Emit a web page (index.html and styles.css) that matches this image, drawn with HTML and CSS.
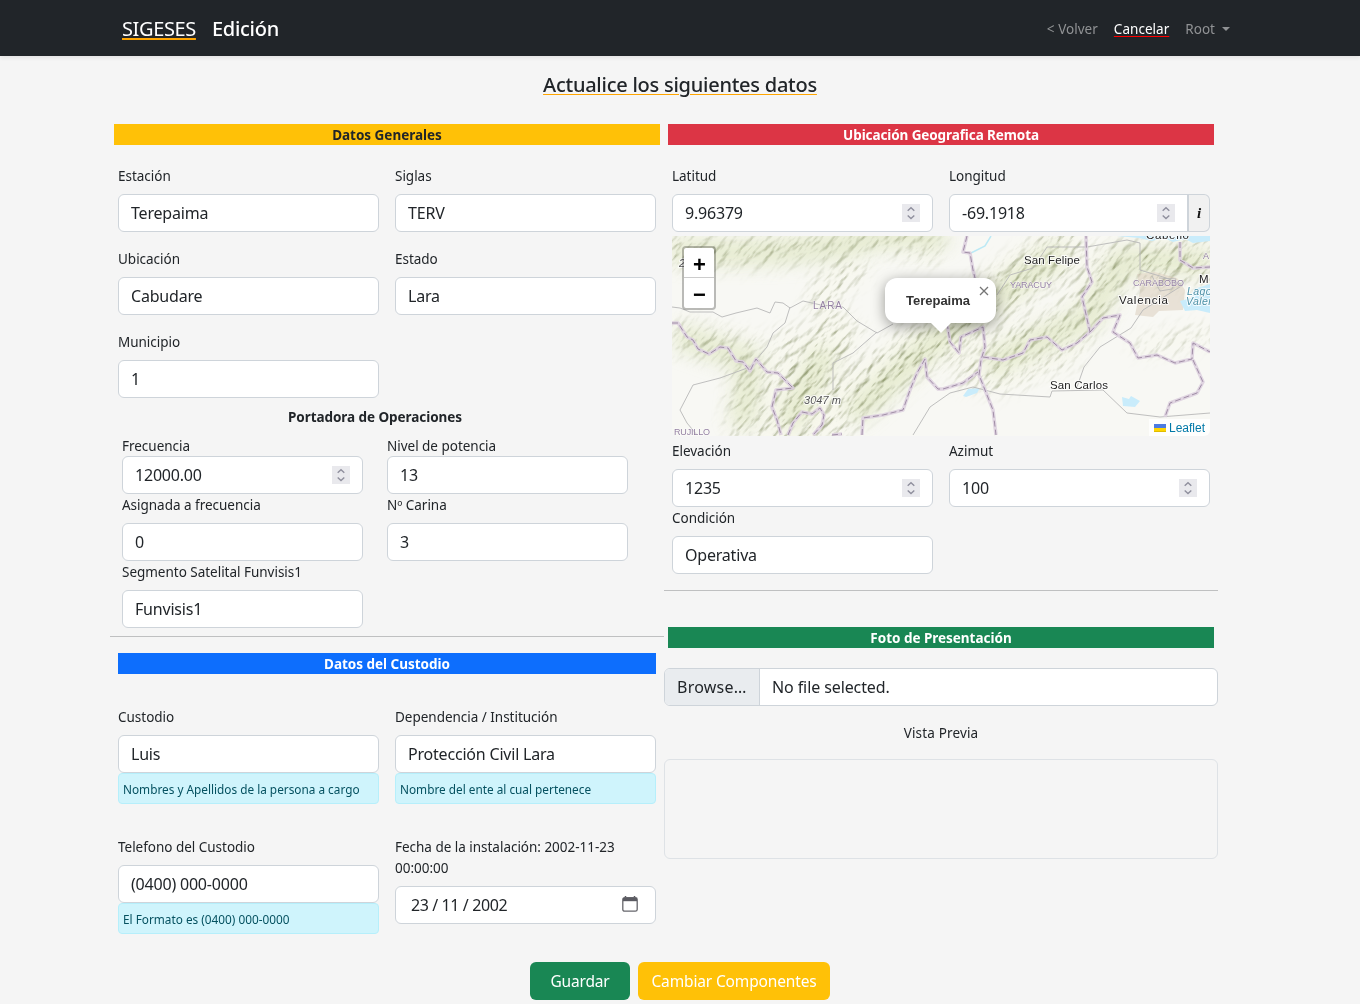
FILE: index.html
```html
<!DOCTYPE html>
<html lang="es">
<head>
<meta charset="utf-8">
<title>SIGESES - Edición</title>
<link rel="stylesheet" href="styles.css">
</head>
<body>
<svg class="defs" width="0" height="0" aria-hidden="true">
  <symbol id="spin" viewBox="0 0 18 18"><path d="M5.7 6.7 9 3.7l3.3 3M5.7 11.6l3.3 3 3.3-3" fill="none" stroke="#8f8f9d" stroke-width="1.4"/></symbol>
</svg>
<nav class="navbar">
  <div class="nav-left"><a class="brand">SIGESES</a><span class="page-name">Edición</span></div>
  <div class="nav-right"><a>&lt; Volver</a><a class="cancel">Cancelar</a><a class="user">Root<i class="caret"></i></a></div>
</nav>
<main class="container">
  <h1 class="title"><span>Actualice los siguientes datos</span></h1>
  <div class="columns">
    <section class="left">
      <h2 class="bar yellow">Datos Generales</h2>
      <div class="grid general">
        <label class="field"><span>Estación</span><div class="control"><input value="Terepaima"></div></label>
        <label class="field"><span>Siglas</span><div class="control"><input value="TERV"></div></label>
        <label class="field"><span>Ubicación</span><div class="control"><input value="Cabudare"></div></label>
        <label class="field"><span>Estado</span><div class="control"><input value="Lara"></div></label>
        <label class="field"><span>Municipio</span><div class="control"><input value="1"></div></label>
      </div>
      <h3 class="subtitle">Portadora de Operaciones</h3>
      <div class="grid carrier">
        <label class="field tight"><span>Frecuencia</span><div class="control"><input value="12000.00"><svg class="spin"><use href="#spin"/></svg></div></label>
        <label class="field tight"><span>Nivel de potencia</span><div class="control"><input value="13"></div></label>
        <label class="field"><span>Asignada a frecuencia</span><div class="control"><input value="0"></div></label>
        <label class="field"><span>Nº Carina</span><div class="control"><input value="3"></div></label>
        <label class="field"><span>Segmento Satelital Funvisis1</span><div class="control"><input value="Funvisis1"></div></label>
      </div>
      <hr>
      <h2 class="bar blue">Datos del Custodio</h2>
      <div class="grid custodian">
        <div class="field"><span>Custodio</span><div class="control"><input value="Luis"></div><p class="help">Nombres y Apellidos de la persona a cargo</p></div>
        <div class="field"><span>Dependencia / Institución</span><div class="control"><input value="Protección Civil Lara"></div><p class="help">Nombre del ente al cual pertenece</p></div>
        <div class="field"><span>Telefono del Custodio</span><div class="control"><input value="(0400) 000-0000"></div><p class="help">El Formato es (0400) 000-0000</p></div>
        <div class="field"><span>Fecha de la instalación: 2002-11-23<br>00:00:00</span><div class="control date"><input value="23 / 11 / 2002"><svg width="16" height="16" viewBox="0 0 16 16"><path d="M3.500 0v3M12.500 0v3" stroke="#5b5b62" stroke-width="1.500"/><path d="M.8 3.500A1.800 1.800 0 0 1 2.600 1.700h10.800a1.800 1.800 0 0 1 1.800 1.800V13.400a1.800 1.800 0 0 1-1.800 1.800H2.600A1.800 1.800 0 0 1 .8 13.400z" fill="none" stroke="#66666c" stroke-width="1.300"/><path d="M1 2h14v3.200H1z" fill="#5b5b62"/></svg></div></div>
      </div>
    </section>
    <section class="right">
      <h2 class="bar red">Ubicación Geografica Remota</h2>
      <div class="grid coords">
        <label class="field"><span>Latitud</span><div class="control"><input value="9.96379"><svg class="spin"><use href="#spin"/></svg></div></label>
        <div class="field"><span>Longitud</span><div class="group"><div class="control"><input value="-69.1918"><svg class="spin"><use href="#spin"/></svg></div><button class="info">i</button></div></div>
      </div>
      <div class="map">
        <svg class="terrain" width="538" height="200" viewBox="0 0 538 200">
          <defs>
            <filter id="relief" x="0" y="0" width="100%" height="100%" color-interpolation-filters="sRGB">
              <feTurbulence type="fractalNoise" baseFrequency=".06 .16" numOctaves="4" seed="11"/>
              <feColorMatrix values="0 0 0 0 0  0 0 0 0 0  0 0 0 0 0  1 0 0 0 0"/>
              <feDiffuseLighting surfaceScale="2.4" diffuseConstant="1.22" lighting-color="#ffffff"><feDistantLight azimuth="270" elevation="55"/></feDiffuseLighting>
              <feComponentTransfer><feFuncR type="linear" slope=".52" intercept=".48"/><feFuncG type="linear" slope=".48" intercept=".52"/><feFuncB type="linear" slope=".64" intercept=".34"/></feComponentTransfer>
            </filter>
            <filter id="soft" x="-20%" y="-20%" width="140%" height="140%"><feGaussianBlur stdDeviation="9"/></filter>
            <mask id="ranges">
              <g filter="url(#soft)" fill="none" stroke="#fff" stroke-linecap="round">
                <path d="M0 14Q90 20 150 5T255 12 M150 70Q160 35 180 35" stroke-width="30" opacity=".8"/>
                <path d="M10 100L75 115 70 190 M118 105L100 160" stroke-width="30" opacity=".75"/>
                <path d="M110 190L140 130 165 100M150 185L210 140 290 80 390 15" stroke-width="46"/>
                <path d="M300 130L400 90 440 30 538 25" stroke-width="44" opacity=".85"/>
                <path d="M320 150L400 120M470 110L538 98" stroke-width="18" opacity=".7"/>
              </g>
            </mask>
          </defs>
          <rect width="538" height="200" fill="#f8f8f4"/>
          <g filter="url(#soft)" fill="none" stroke="#dfe6c8" opacity=".7"><path d="M0 15Q120 22 190 5T270 12M5 100L78 125 70 190M115 190L155 115M180 180L280 90 390 15M315 130L420 80 450 25 538 25" stroke-width="25"/></g>
          <path d="M465 38l18-2 22 6 8 12-2 20-24 1-6 6-18-2 5-24z" fill="#e8e1d6"/>
          <g class="shade" mask="url(#ranges)"><g transform="rotate(-48 269 100)"><rect x="-60" y="-220" width="660" height="640" filter="url(#relief)"/></g></g>
          <g fill="#c9ecfb"><path d="M445 0h93v5l-17 2-8-4-12 3-9-4-12 3-13-3z"/><path d="M538 48l-16 5-3 9-11 3 5 10 12-1 13 3zM291 160l5-7 12-1-3 5-11 4zM450 161l7 2 2-3 9 5-5 6-12-1z"/></g>
          <g fill="none" stroke="#b8b8b8" stroke-width=".9">
            <path d="M0 71l8 1 10 4h23l9 5 14-4 21-5 13 5 5-11 8 1 7 5 13-7 18 4 22 2 14 14 20 12 16-9"/>
            <path d="M118 71l-5 16-12 10-6 14-17 20-30 11-27 7-13 25 7 13 10 12M205 96l-24 21-20 10v27M241 199l17-28 20-14 23-6 27 7 50 3 2-6 51-1 24 23 33 4 50-4"/>
            <path d="M325 59l13-20 23-7 14-21 40 0 40-7 13 3v27l23 7 20 8-40 25-12 18-31 19-16 20-7 20M480 40l8 15 12-2 4-10-17-1"/>
          </g>
          <path d="M319 0l-6 10-14 7" fill="none" stroke="#bce9f5" stroke-width="1.5"/>
          <defs><path id="borders" d="M0 87L6 87 15 101 21 104 26 113 37 118 48 111 56 112 64 125 71 126 78 135 84 123 95 136 106 137 121 152 104 154 100 171 105 184 109 199M116 199L121 187 130 176 140 178 148 172 152 179 150 189 141 199M160 199L170 198M190 199L191 182 211 179 231 174 238 154 245 137 253 123 255 141 266 153 271 153 291 147 306 136M295 0L291 16 298 17 301 34 303 42M275 87L278 106 287 117 289 101 311 91 313 111 309 124 307 139 313 154 321 174 324 199M311 121L331 124 351 117 358 104 375 101 390 114 405 107 418 96 413 74 410 61 420 46 415 31 414 0M418 96L431 82 448 79 441 96 458 107 466 122 485 119 503 127 520 123 521 107 538 116M521 124L531 146 525 157 498 167 493 181M508 6L508 24 521 32 538 31"/></defs>
          <g fill="none" stroke-linejoin="round"><use href="#borders" stroke="#ddd0df" stroke-opacity=".9" stroke-width="3.500"/><use href="#borders" stroke="#98869f" stroke-width=".9" stroke-dasharray="6 3"/></g>
          <g class="places">
            <text x="352" y="28" textLength="56">San Felipe</text><text x="447" y="68" textLength="49">Valencia</text><text x="378" y="153" textLength="58">San Carlos</text><text x="527" y="47">M</text><text x="474" y="3" textLength="43">Cabello</text>
          </g>
          <g class="states">
            <text class="lara" x="141" y="73" textLength="29">LARA</text><text x="338" y="52" textLength="42">YARACUY</text><text x="461" y="50" textLength="51">CARABOBO</text><text x="531" y="23">A</text><text x="2" y="199" textLength="36">RUJILLO</text>
          </g>
          <g class="heights"><text x="132" y="168" textLength="37">3047 m</text><text x="7" y="31">2</text></g>
          <g class="water"><text x="515" y="59">Lago</text><text x="514" y="69">Valer</text></g>
        </svg>
        <div class="zoom"><b>+</b><b>−</b></div>
        <div class="popup"><strong>Terepaima</strong><span class="close"><svg width="10" height="10"><path d="M1 1l8 8M9 1L1 9" stroke="#757575" stroke-width="1.300"/></svg></span></div>
        <div class="credit"><svg width="12" height="8"><path fill="#4c7be1" d="M0 0h12v4H0z"/><path fill="#ffd500" d="M0 4h12v3H0z"/><path fill="#e0bc00" d="M0 7h12v1H0z"/></svg>Leaflet</div>
      </div>
      <div class="grid position">
        <label class="field"><span>Elevación</span><div class="control"><input value="1235"><svg class="spin"><use href="#spin"/></svg></div></label>
        <label class="field"><span>Azimut</span><div class="control"><input value="100"><svg class="spin"><use href="#spin"/></svg></div></label>
        <label class="field"><span>Condición</span><div class="control"><input value="Operativa"></div></label>
      </div>
      <hr>
      <h2 class="bar green">Foto de Presentación</h2>
      <div class="file"><span class="browse">Browse…</span><span class="chosen">No file selected.</span></div>
      <p class="preview-label">Vista Previa</p>
      <div class="preview"></div>
    </section>
  </div>
  <div class="actions"><button class="save">Guardar</button><button class="change">Cambiar Componentes</button></div>
</main>
</body>
</html>
```

FILE: styles.css
```css
* { box-sizing: border-box; }
body { margin: 0; height: 1004px; overflow: hidden; background: #f5f5f5; color: #212529; font: 13.5px/21px "Noto Sans", sans-serif; letter-spacing: -.02px; }
h1, h2, h3, p { margin: 0; }
.defs { position: absolute; }
input, button { font: inherit; letter-spacing: inherit; color: inherit; }
.navbar { height: 56px; padding: 1px 130px 0 122px; display: flex; justify-content: space-between; align-items: center; background: #212529; color: #fff; box-shadow: 0 2px 4px rgba(0,0,0,.075); }
.nav-left { display: flex; gap: 16px; font-size: 20px; line-height: 30px; letter-spacing: -.3px; }
.brand { letter-spacing: -.37px; text-decoration: underline #ffa500 2px; text-underline-offset: 2px; }
.page-name { font-weight: 500; letter-spacing: -.28px; }
.nav-right { display: flex; gap: 16px; padding-top: 1px; color: #909294; }
.nav-right a { letter-spacing: .03px; }
.cancel { color: #fff; text-decoration: underline red 1px; text-underline-offset: 2px; }
.user { display: flex; align-items: center; gap: 7px; }
.caret { border: 4px solid transparent; border-top-color: currentColor; border-bottom: 0; }
.container { width: 1140px; margin: 0 auto; }
.title { height: 68px; padding-top: 14px; font-size: 20px; line-height: 30px; font-weight: 500; letter-spacing: -.25px; text-align: center; }
.title span { text-decoration: underline #ffa500 1.4px; text-underline-offset: 2px; }
.columns { display: grid; grid-template-columns: 554px 554px; height: 838px; }
.bar { height: 21px; margin: 0 4px; padding-top: 1px; font-size: 13.5px; line-height: 21px; font-weight: 700; text-align: center; }
.yellow { background: #ffc107; }
.red { background: #dc3545; color: #fff; letter-spacing: -.1px; }
.green { background: #198754; color: #fff; }
.blue { background: #0d6efd; color: #fff; margin: 0 8px; }
.grid { display: grid; grid-template-columns: 261px 261px; column-gap: 16px; margin: 0 8px; align-items: start; }
.general { margin-top: 20px; row-gap: 16px; }
.coords { margin-top: 20px; }
.field { display: flex; flex-direction: column; gap: 8px; min-width: 0; }
.field > span { padding-top: 1px; margin-bottom: -1px; }
.tight { gap: 0; }
.control { height: 38px; width: 100%; min-width: 0; display: flex; align-items: center; padding: 0 12px; background: #fff; border: 1px solid #ced4da; border-radius: 6px; }
.control input { flex: 1; width: 0; min-width: 0; padding: 0; border: 0; outline: 0; background: none; font-size: 16px; letter-spacing: -.2px; }
.spin { width: 18px; height: 18px; flex: none; background: #e9e9ed; }
.subtitle { margin: 8px 24px 7px 0; padding-top: 1px; font-size: 13.5px; line-height: 21px; font-weight: 700; letter-spacing: -.06px; text-align: center; }
.carrier { grid-template-columns: 241px 241px; column-gap: 24px; margin: 0 12px; }
hr { height: 1px; margin: 8px 0 16px; border: 0; background: #bfc0c1; }
.custodian { margin-top: 32px; row-gap: 32px; }
.help { height: 31px; margin-top: -8px; padding: 0 4px; font-size: 11.8px; line-height: 31px; letter-spacing: 0; border: 1px solid #b6effb; border-radius: 4px; background: #cff4fc; color: #055160; }
.date { padding: 0 17px 0 15px; }
.control.date input { letter-spacing: -.4px; }
.date svg { margin-bottom: 2px; }
.group { display: flex; }
.group .control { flex: 1; border-radius: 6px 0 0 6px; }
.info { width: 23px; margin-left: -1px; padding: 0; flex: none; border: 1px solid #ced4da; border-left-width: 2px; border-radius: 0 6px 6px 0; background: #f1f1f1; font: italic bold 15px "Liberation Serif", serif; color: #111; }
.map { position: relative; width: 538px; height: 200px; margin: 4px 8px; overflow: hidden; border-radius: 0 0 6px 6px; font-family: "Liberation Sans", sans-serif; letter-spacing: 0; }
.terrain { display: block; font-family: "Liberation Sans", sans-serif; }
.shade { mix-blend-mode: multiply; }
.terrain text { paint-order: stroke; stroke: #fff; stroke-opacity: .8; stroke-width: 2px; }
.places { font-size: 11.5px; fill: #222; }
.states { font-size: 9px; fill: #9480a2; }
.terrain .states text { stroke-width: 1px; stroke-opacity: .6; }
.states .lara { font-size: 10px; }
.heights { font-size: 11px; font-style: italic; fill: #555; }
.water { font-size: 10.500px; font-style: italic; fill: #4d91a7; letter-spacing: .4px; }
.zoom { position: absolute; left: 10px; top: 10px; width: 34px; border: 2px solid rgba(0,0,0,.25); border-radius: 4px; background: #fff; background-clip: padding-box; color: #000; }
.zoom b { display: block; height: 30px; padding-left: 1px; font: bold 22px/33px "Liberation Sans", sans-serif; text-align: center; }
.zoom b:first-child { border-bottom: 1px solid #ccc; }
.popup { position: absolute; left: 213px; top: 42px; width: 111px; height: 45px; border-radius: 12px; background: #fff; box-shadow: 0 3px 14px rgba(0,0,0,.4); font-size: 13px; line-height: 45px; color: #333; text-align: center; padding-right: 5px; }
.popup::after { content: ""; position: absolute; left: 46px; top: 45px; border: 10px solid transparent; border-top-color: #fff; border-bottom: 0; }
.close { position: absolute; right: 7px; top: 8px; line-height: 0; }
.credit { position: absolute; right: 0; bottom: 0; height: 17px; padding: 1px 5px 0; display: flex; align-items: center; gap: 3px; background: rgba(255,255,255,.8); font-size: 12px; color: #0078a8; }
.right hr { margin: 16px 0 36px; }
.file { display: flex; height: 38px; margin-top: 20px; overflow: hidden; border: 1px solid #ced4da; border-radius: 6px; background: #fff; font-size: 16px; line-height: 36px; letter-spacing: -.1px; }
.browse { width: 95px; flex: none; padding-left: 12px; letter-spacing: .25px; background: #e9ecef; border-right: 1px solid #ced4da; }
.chosen { padding-left: 12px; }
.preview-label { margin: 17px 0 15px; letter-spacing: .15px; text-align: center; }
.preview { height: 100px; border: 1px solid #dee2e6; border-radius: 6px; }
.actions { display: flex; justify-content: center; gap: 8px; }
.actions button { height: 38px; padding: 0; border: 0; border-radius: 6px; color: #fff; font-size: 15.5px; letter-spacing: -.15px; }
.save { width: 100px; background: #198754; }
.change { width: 192px; background: #ffc107; }
```
